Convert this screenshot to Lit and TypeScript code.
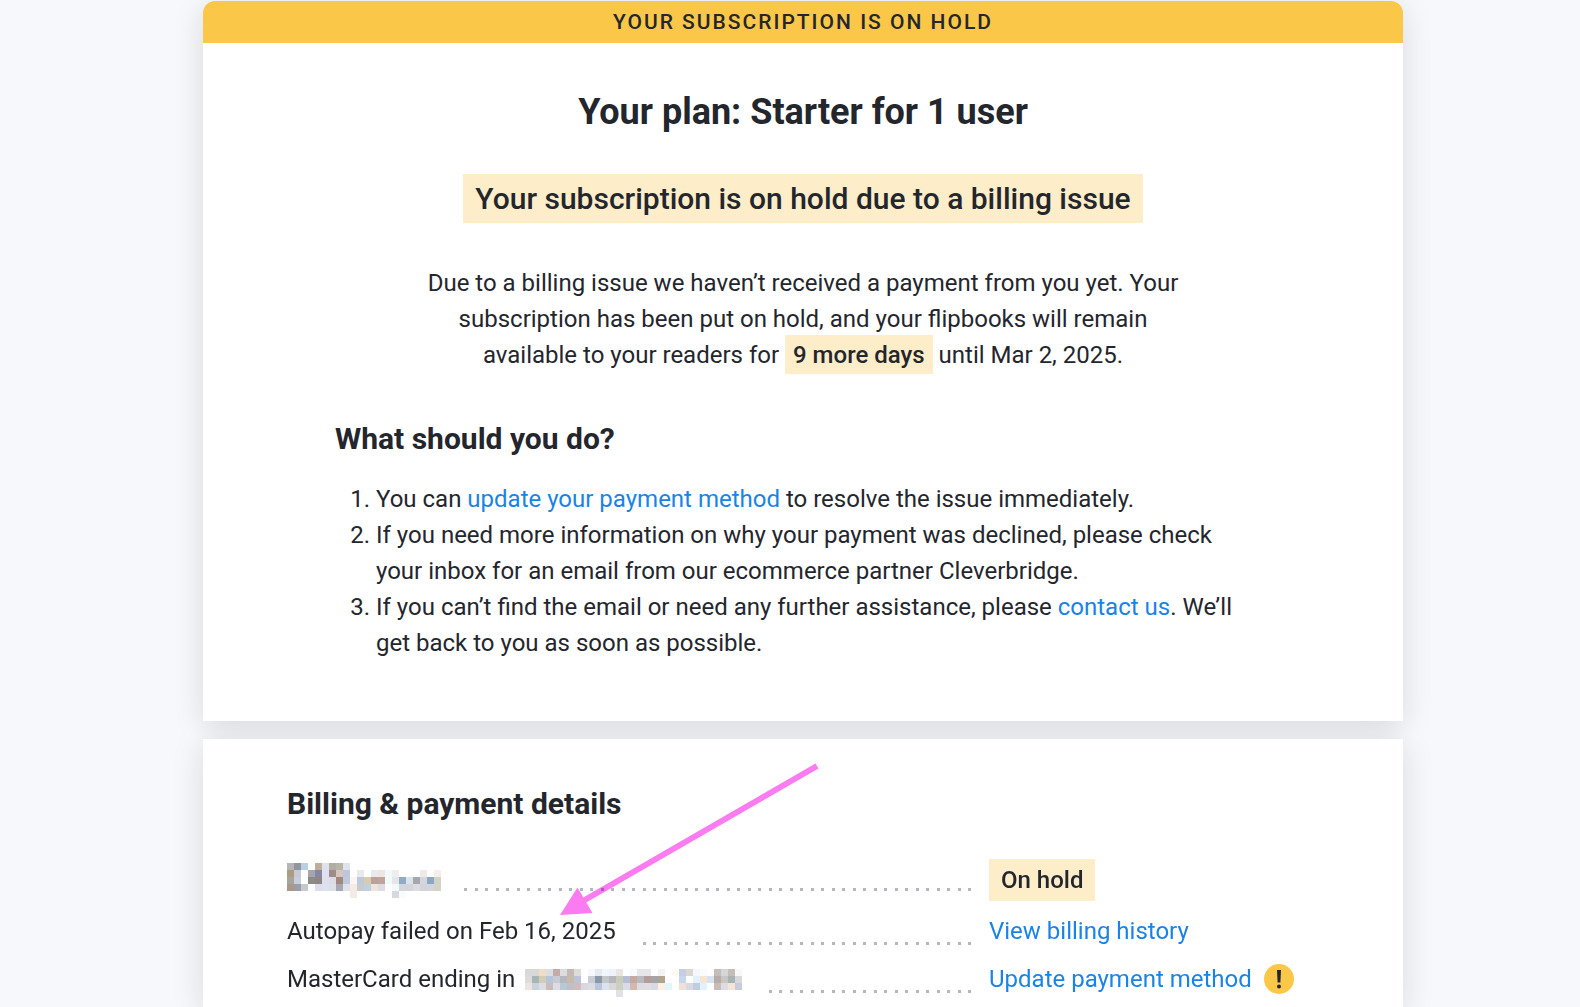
import { LitElement, html, svg, css } from "lit";
import { customElement, property } from "lit/decorators.js";

const CELL = 7;

/* Each string is one row of the mosaic; cells are hex colours, "-" is empty.
   The last row hangs below the box, as a descender would. */
const PRICE_MOSAIC = [
  "b5b5b5 90959e b8d0e0 - bfae9c dfe2ec b0aea4 b5b5a8 e0e3ec",
  "ad9c80 c6cad6 - a5a5ab 8587a5 dfe2ee 9c8c8a d8c5be bcc6dc - e8eaec - eaeaec efe6e4 f0fafc eeeeee - - - eeeaea - f5eeea",
  "a3a59e cacdda - 8f8a8a 8f8584 dde0ee dcdde4 a3887e bfc9dc fbf6f4 bccbdc dccbab b5a39c bda59e f0fafc e5e5ea 8fabc6 d8e6ea a5a6ae d5d6dc 88a8c6 d3d2c6",
  "ac9886 9a9ea6 c8c9cc - dcdeea dde2f3 dee0e8 a6a8b5 e0e3ea f5eae4 c8cace bfd0e3 f0e4da dcdde4 - f0fafc d5d5dc d3d5da dcdce2 d3d3da d3d5dc d5d3c8",
  "- - - - - - - - - f5ebe6 - - - - - d6dade f8fcff",
];

const CARD_MOSAIC = [
  "d8d8da d8d8d8 f0ddc8 dcdde2 c2aca8 dcdce0 c6b8b4 dcdcd8 - f5f9fd e6eaf0 f0f6fd f0f2fa eae4e2 - f5fafd e6e6ea e6e6ea - f2f4f4 - fefaf3 c3cde3 dcd6d2 f3f8fc f8fcfe - c5bdba d5d6da c5bdb8 f5faf7",
  "dcdcdc a8b5b5 d3ccb6 b8c3dc c9cbd2 b5b5c4 c6bba6 bcc3d8 - c9ccd5 8c98a8 c4c6c8 b5b6be c9ccb8 b5bed5 c6a8a0 b8bac0 b59c9a a3a6a8 b0a490 - - c8d5ea - e3f0fd f8e4d2 d6e3f0 b8aca8 c8c6c4 a8b3b3 d8d8d8",
  "f0e3de c8d3e0 dcdde2 c8bdba dcdce6 b8c9d5 bebfc8 d0bdbb d8d8e2 dcdce2 b8c5dc dce3ee d8d8d8 ccd0c0 d8dce5 d3b8ae dcdce2 e0dde0 d8dae2 fdf0e0 e0f6fd - f0e0da d8d8e2 bfcde0 e0f3fd - c8bdb8 dcdce2 f3e3d8 c8cbdc",
  "- - - - - - - - - - - - - e0e2e6",
];

@customElement("redacted-text")
export class RedactedText extends LitElement {
  @property({ attribute: false }) rows: string[] = [];

  static styles = css`
    :host {
      display: inline-flex;
    }
    .mosaic {
      display: block;
      overflow: visible;
    }
  `;

  render() {
    const grid = this.rows.map((r) => r.split(" "));
    const width = Math.max(0, ...grid.map((r) => r.length)) * CELL;
    const height = Math.max(0, grid.length - 1) * CELL;
    return html`<svg
      class="mosaic"
      width=${width}
      height=${height}
      shape-rendering="crispEdges"
      aria-hidden="true"
    >
      ${grid.map((row, y) =>
        row.map((c, x) =>
          c === "-"
            ? null
            : svg`<rect x=${x * CELL} y=${y * CELL} width=${CELL} height=${CELL} fill=${"#" + c}></rect>`
        )
      )}
    </svg>`;
  }
}

@customElement("app-root")
export class AppRoot extends LitElement {
  static styles = css`
    :host {
      display: grid;
      grid-template-columns: minmax(0, 203fr) minmax(0, 1200px) minmax(0, 177fr);
      min-height: 100vh;
      box-sizing: border-box;
      padding-top: 1px;
      background: #f6f8fc;
      color: #24262d;
      font: 400 24px/36px Roboto, sans-serif;
    }
    .stack {
      grid-column: 2;
      display: flex;
      flex-direction: column;
      gap: 18px;
      isolation: isolate;
    }
    .card {
      position: relative;
      background: #fff;
    }
    .card::before {
      content: "";
      position: absolute;
      inset: 0;
      z-index: -1;
      box-shadow: 0 6px 30px rgba(20, 20, 24, 0.13);
    }
    .plan,
    .plan::before {
      border-radius: 12px 12px 0 0;
    }
    .banner {
      border-radius: 12px 12px 0 0;
      background: #fac748;
      text-align: center;
      font-size: 21px;
      font-weight: 500;
      line-height: 42px;
      letter-spacing: 2px;
      text-transform: uppercase;
    }
    .plan-body {
      display: flex;
      flex-direction: column;
      align-items: center;
      padding: 42px 132px 60px;
    }
    h1,
    h2,
    p,
    ol {
      margin: 0;
    }
    h1 {
      font-size: 36px;
      line-height: 54px;
      font-weight: 700;
    }
    h2 {
      font-size: 30px;
      line-height: 42px;
      font-weight: 700;
    }
    mark {
      background: #fdedc9;
      color: inherit;
      font-weight: 500;
    }
    .status {
      margin-top: 35px;
      padding: 2px 12px;
      font-size: 30px;
      line-height: 45px;
    }
    .notice {
      max-width: 780px;
      margin-top: 42px;
      text-align: center;
    }
    .days {
      padding: 6px 8px 5px;
    }
    .advice {
      align-self: stretch;
      margin-top: 45px;
    }
    .advice ol {
      margin-top: 21px;
      padding: 0 12px 0 41px;
    }
    a {
      color: #1a83e6;
      text-decoration: none;
    }
    .billing {
      flex: 1;
      padding: 44px 84px 9px;
    }
    .rows {
      display: grid;
      grid-template-columns: minmax(0, 684fr) minmax(0, 330fr);
      column-gap: 18px;
      row-gap: 12px;
      margin-top: 34px;
    }
    .entry {
      display: flex;
      align-items: center;
      gap: 20px;
      height: 36px;
    }
    .label {
      display: flex;
      align-items: center;
      gap: 10px;
      white-space: nowrap;
    }
    .dots {
      flex: 1;
      align-self: flex-end;
      height: 3px;
      margin-bottom: 4px;
      background: repeating-linear-gradient(
        to left,
        #b6b6be 0 3px,
        transparent 3px 10px,
        #b6b6be 10px 13px,
        transparent 13px 21px
      );
    }
    .action {
      display: flex;
      align-items: center;
      gap: 12px;
      white-space: nowrap;
    }
    .hold {
      padding: 3px 12px;
    }
    .alert {
      display: block;
    }
    .arrow {
      position: absolute;
      left: 355px;
      top: 20px;
      pointer-events: none;
      mix-blend-mode: multiply;
    }
  `;

  render() {
    return html`
      <main class="stack">
        <section class="card plan">
          <div class="banner">Your subscription is on hold</div>
          <div class="plan-body">
            <h1>Your plan: Starter for 1 user</h1>
            <mark class="status">Your subscription is on hold due to a billing issue</mark>
            <p class="notice">
              Due to a billing issue we haven’t received a payment from you yet. Your subscription has been
              put on hold, and your flipbooks will remain available to your readers for
              <mark class="days">9 more days</mark> until Mar 2, 2025.
            </p>
            <div class="advice">
              <h2>What should you do?</h2>
              <ol>
                <li>You can <a href="#payment">update your payment method</a> to resolve the issue immediately.</li>
                <li>
                  If you need more information on why your payment was declined, please check your inbox for an
                  email from our ecommerce partner Cleverbridge.
                </li>
                <li>
                  If you can’t find the email or need any further assistance, please
                  <a href="#contact">contact us</a>. We’ll get back to you as soon as possible.
                </li>
              </ol>
            </div>
          </div>
        </section>

        <section class="card billing">
          <h2>Billing &amp; payment details</h2>
          <div class="rows">
            <div class="entry">
              <span class="label"><redacted-text .rows=${PRICE_MOSAIC}></redacted-text></span>
              <span class="dots"></span>
            </div>
            <div class="action"><mark class="hold">On hold</mark></div>

            <div class="entry">
              <span class="label">Autopay failed on Feb 16, 2025</span>
              <span class="dots"></span>
            </div>
            <div class="action"><a href="#history">View billing history</a></div>

            <div class="entry">
              <span class="label">
                MasterCard ending in <redacted-text .rows=${CARD_MOSAIC}></redacted-text>
              </span>
              <span class="dots"></span>
            </div>
            <div class="action">
              <a href="#payment">Update payment method</a>
              <svg class="alert" width="30" height="30" viewBox="0 0 30 30" aria-hidden="true">
                <circle cx="15" cy="15" r="15" fill="#fac748" />
                <path d="M13 6h4l-.6 12.500h-2.800z" fill="#24262d" />
                <circle cx="15" cy="22.500" r="2" fill="#24262d" />
              </svg>
            </div>
          </div>
          <svg class="arrow" width="265" height="160" viewBox="0 0 265 160" aria-hidden="true">
            <path d="M259 7L25 142" stroke="#fb7bf0" stroke-width="6" />
            <path d="M2 156L19.500 128.500L34.500 154z" fill="#fb7bf0" />
          </svg>
        </section>
      </main>
    `;
  }
}
